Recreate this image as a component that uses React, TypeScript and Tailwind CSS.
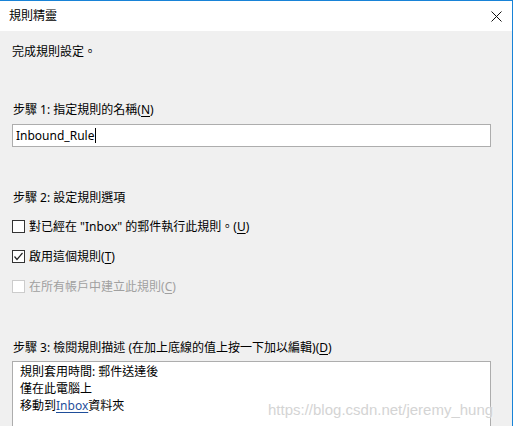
const font = "font-['Noto_Sans','Noto_Sans_CJK_TC',sans-serif]";

const Mn = ({ c }: { c: string }) => (
  <span>
    (<span className="underline underline-offset-2">{c}</span>)
  </span>
);

const Box = ({ checked, disabled }: { checked?: boolean; disabled?: boolean }) => (
  <span
    className={`flex h-[13px] w-[13px] shrink-0 items-center justify-center border bg-white ${
      disabled ? "border-[#cccccc]" : "border-[#333333]"
    }`}
  >
    {checked && (
      <svg width="11" height="11" viewBox="0 0 11 11">
        <path d="M1.5 5.5 L4 8.5 L9.5 2" fill="none" stroke="#222" strokeWidth="1.2" />
      </svg>
    )}
  </span>
);

export default function App() {
  return (
    <div className={`relative h-[426px] w-[513px] overflow-hidden bg-[#f0f0f0] text-[12px] text-black ${font}`}>
      {/* title bar */}
      <div className="flex h-[31px] items-center justify-between border-t border-r border-[#1883d7] bg-white pl-[9px] pr-[10px]">
        <span className="leading-[16px]">規則精靈</span>
        <svg width="11" height="11" viewBox="0 0 11 11">
          <path d="M0.5 0.5 L10.5 10.5 M10.5 0.5 L0.5 10.5" stroke="#111" strokeWidth="1" />
        </svg>
      </div>

      <div className="h-[395px] border-r border-[#1883d7] pl-[12px] pr-[21px]">
        <div className="pt-[13px] leading-[16px]">完成規則設定。</div>

        <div className="mt-[42px] pl-px leading-[16px]">
          步驟 1: 指定規則的名稱<Mn c="N" />
        </div>
        <div className="mt-[6px] flex h-[23px] items-center border border-[#adadad] bg-white pl-[3px] text-[12px]">
          <span>Inbound_Rule</span>
          <span className="ml-px h-[15px] w-px bg-black" />
        </div>

        <div className="mt-[43px] pl-px leading-[16px]">步驟 2: 設定規則選項</div>
        <div className="mt-[13px] flex flex-col gap-[15px]">
          <label className="flex h-[15px] items-center gap-[4px]">
            <Box />
            <span>
              對已經在 "Inbox" 的郵件執行此規則。<Mn c="U" />
            </span>
          </label>
          <label className="flex h-[15px] items-center gap-[4px]">
            <Box checked />
            <span>
              啟用這個規則<Mn c="T" />
            </span>
          </label>
          <label className="flex h-[15px] items-center gap-[4px] text-[#a0a0a0]">
            <Box disabled />
            <span>
              在所有帳戶中建立此規則<Mn c="C" />
            </span>
          </label>
        </div>

        <div className="mt-[46px] pl-px leading-[16px]">
          步驟 3: 檢閱規則描述 (在加上底線的值上按一下加以編輯)<Mn c="D" />
        </div>
        <div className="relative mt-[5px] h-[80px] border border-[#adadad] bg-white pl-[7px] pt-[1px] leading-[17px]">
          <div>規則套用時間: 郵件送達後</div>
          <div>僅在此電腦上</div>
          <div>
            移動到<span className="text-[#1f4e9a] underline underline-offset-2">Inbox</span>資料夾
          </div>
        </div>
      </div>

      {/* watermark */}
      <div className="absolute left-[268px] top-[400px] font-['Liberation_Sans',sans-serif] text-[15px] leading-[20px] text-[#d4d4d4] [text-shadow:0_0_2px_#ffffff]">
        https://blog.csdn.net/jeremy_hung
      </div>
    </div>
  );
}
